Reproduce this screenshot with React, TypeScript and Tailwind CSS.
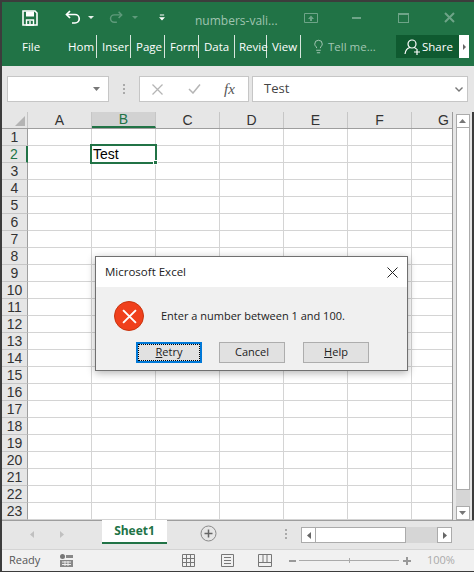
import React from 'react'
import { Lightbulb } from 'lucide-react'

const ui = "font-['Open_Sans','Noto_Sans',sans-serif]"
const cols = ['A', 'B', 'C', 'D', 'E', 'F', 'G']
const rows = Array.from({ length: 23 }, (_, i) => i + 1)

// the narrow window squeezes these labels, so only the visible part is written
const ribbonTabs = [
  { label: 'Hom', w: 'w-[29px]', pl: 'pl-0' },
  { label: 'Inser', w: 'w-[34px]', pl: 'pl-[5px]' },
  { label: 'Page', w: 'w-[34px]', pl: 'pl-[5px]' },
  { label: 'Form', w: 'w-[34px]', pl: 'pl-[5px]' },
  { label: 'Data', w: 'w-[36px]', pl: 'pl-[5px]' },
  { label: 'Revie', w: 'w-[32px]', pl: 'pl-[4px]' },
  { label: 'View', w: 'w-[34px]', pl: 'pl-[5px]' },
]

const Caret = ({ className = '' }: { className?: string }) => (
  <svg width="7" height="4" viewBox="0 0 7 4" className={className}>
    <path d="M0 0h7L3.5 4z" fill="currentColor" />
  </svg>
)

const TitleBar = () => (
  <div className="h-[31px] flex items-center text-white relative">
    {/* quick access */}
    <svg width="16" height="16" viewBox="0 0 16 16" fill="none" className="ml-[20px]">
      <path d="M1 1h12l2 2v12H1z" stroke="#fff" strokeWidth="1.6" />
      <path d="M4 1.5h8v5H4z" fill="#fff" />
      <path d="M4.5 10h7v5h-7z" stroke="#fff" strokeWidth="1.4" />
      <path d="M8 11v3" stroke="#fff" strokeWidth="1.4" />
    </svg>
    <svg width="16" height="15" viewBox="0 0 16 15" className="ml-[27px]" fill="none">
      <path d="M5 1 1.5 4.5 5 8" stroke="#fff" strokeWidth="1.7" />
      <path d="M2 4.5h8a4 4 0 0 1 0 8.500H7" stroke="#fff" strokeWidth="1.7" />
    </svg>
    <svg width="6" height="3" viewBox="0 0 6 3" className="ml-[7px]"><path d="M0 0h6L3 3z" fill="#e6f0ea" /></svg>
    <svg width="14" height="15" viewBox="0 0 16 15" className="ml-[15px]" fill="none">
      <path d="M11 1l3.500 3.500L11 8" stroke="#5f9a7b" strokeWidth="1.7" />
      <path d="M14 4.500H6a4 4 0 0 0 0 8.500h3" stroke="#5f9a7b" strokeWidth="1.7" />
    </svg>
    <svg width="6" height="3" viewBox="0 0 6 3" className="ml-[9px]"><path d="M0 0h6L3 3z" fill="#5f9a7b" /></svg>
    <svg width="6" height="8" viewBox="0 0 7 8" className="ml-[21px]">
      <path d="M1 0h5v1H1zM0 3h7L3.500 7z" fill="#fff" />
    </svg>
    <span className="ml-[30px] mt-[6px] text-[12px] text-[#9fc4b0] w-[100px] whitespace-nowrap">numbers-vali...</span>
    {/* window buttons */}
    <svg width="14" height="10" viewBox="0 0 14 10" className="ml-[9px]" fill="none">
      <path d="M.5.500h13v9H.5z" stroke="#6ea488" />
      <path d="M7 2.500 10 6H8v2H6V6H4z" fill="#6ea488" />
    </svg>
    <div className="ml-[34px] w-[9px] h-[2px] bg-[#6ea488] mt-[1px]" />
    <div className="ml-[37px] w-[11px] h-[10px] border border-[#6ea488] border-t-[2px]" />
    <svg width="11" height="11" viewBox="0 0 11 11" className="ml-[35px]" fill="none">
      <path d="M1 1l9 9M10 1l-9 9" stroke="#6ea488" strokeWidth="2" />
    </svg>
  </div>
)

const RibbonTabs = () => (
  <div className="h-[23px] flex items-center text-white text-[11.500px] mt-[2px]">
    <span className="ml-[20px] w-[46px]">File</span>
    {ribbonTabs.map(t => (
      <div key={t.label} className={`${t.w} ${t.pl} h-[23px] flex items-center whitespace-nowrap border-r border-[#d8e6de]`}>
        <span className="leading-none">{t.label}</span>
      </div>
    ))}
    <Lightbulb size={15} strokeWidth={1.4} className="ml-[10px] text-[#b3d0c0]" />
    <span className="ml-[2px] text-[#a3c6b3] text-[11.500px] w-[68px] whitespace-nowrap">Tell me...</span>
    <div className="w-[63px] h-[23px] bg-[#0f5a30] flex items-center pl-[8px]">
      <svg width="17" height="16" viewBox="0 0 17 16" fill="none">
        <circle cx="8" cy="5" r="4" stroke="#fff" strokeWidth="1.200" />
        <path d="M1 15c.5-4 2.500-6 5-6.500M10 8.500c1 .3 1.800.7 2.500 1.500" stroke="#fff" strokeWidth="1.200" />
        <path d="M10 13h6M13 10v6" stroke="#fff" strokeWidth="1.200" />
      </svg>
      <span className="ml-[1px] text-[11.500px]">Share</span>
    </div>
    <div className="w-[10px] h-[23px] bg-white flex items-center justify-center">
      <svg width="3" height="6" viewBox="0 0 3 6"><path d="M0 0l3 3-3 3z" fill="#666" /></svg>
    </div>
  </div>
)

const FormulaBar = () => (
  <div className="h-[46px] bg-[#e6e6e6] flex pt-[10px]">
    <div className="ml-[5px] w-[102px] h-[26px] bg-white border border-[#c6c6c6] flex items-center justify-end pr-[8px]">
      <Caret className="text-[#777]" />
    </div>
    <div className="w-[30px] h-[26px] flex flex-col items-center justify-center gap-[2px]">
      <div className="w-[2px] h-[2px] bg-[#aaa]" />
      <div className="w-[2px] h-[2px] bg-[#aaa]" />
      <div className="w-[2px] h-[2px] bg-[#aaa]" />
    </div>
    <div className="w-[110px] h-[26px] bg-white border border-[#c6c6c6] flex items-center">
      <svg width="11" height="11" viewBox="0 0 11 11" className="ml-[12px]" fill="none">
        <path d="M.5.500l10 10M10.500.500l-10 10" stroke="#b5b5b5" strokeWidth="1.300" />
      </svg>
      <svg width="13" height="10" viewBox="0 0 13 10" className="ml-[25px]" fill="none">
        <path d="M1 5l4 4 7-8.500" stroke="#b5b5b5" strokeWidth="1.500" />
      </svg>
      <span className="ml-[23px] font-['Liberation_Serif',serif] italic text-[15px] text-[#555]">fx</span>
    </div>
    <div className="ml-[3px] w-[216px] h-[26px] bg-white border border-[#c6c6c6] flex items-center pl-[11px] text-[13px] text-[#444]">
      <span className="flex-1">Test</span>
      <svg width="8" height="5" viewBox="0 0 8 5" className="mr-[4px]" fill="none">
        <path d="M.5.500 4 4 7.500.500" stroke="#777" strokeWidth="1.400" />
      </svg>
    </div>
  </div>
)

const Sheet = () => (
  <div className="flex h-[408px]">
    <div className="w-[451px] overflow-hidden border-r border-[#9b9b9b] font-['Liberation_Sans',sans-serif]">
      <div className="flex h-[17px] bg-[#e6e6e6] border-b border-[#9e9e9e]">
        <div className="w-[26px] shrink-0 border-r border-[#c6c6c6] flex items-end justify-end p-[2px]">
          <svg width="10" height="10" viewBox="0 0 10 10"><path d="M10 0v10H0z" fill="#b4b4b4" /></svg>
        </div>
        {cols.map(c => (
          <div
            key={c}
            className={`w-[64px] shrink-0 h-[16px] flex items-center justify-center text-[14px] border-r border-[#c6c6c6] ${c === 'B' ? 'bg-[#d2d2d2] text-[#217346] border-b-2 border-b-[#217346]' : 'text-[#333]'}`}
          >
            {c}
          </div>
        ))}
      </div>
      {rows.map(r => (
        <div key={r} className="flex h-[17px]">
          <div
            className={`w-[26px] shrink-0 bg-[#e6e6e6] border-b border-[#c6c6c6] flex items-center justify-center text-[14px] border-r ${r === 2 ? 'bg-[#d2d2d2] text-[#217346] border-r-2 border-r-[#217346]' : 'text-[#333] border-r-[#9e9e9e]'}`}
          >
            {r}
          </div>
          {cols.map(c => (
            <div key={c} className="w-[64px] shrink-0 bg-white border-r border-b border-[#d4d4d4] relative">
              {r === 2 && c === 'B' && (
                <div className="absolute -left-[2px] -top-[2px] w-[67px] h-[20px] border-2 border-[#217346] text-[14px] leading-[16px] pl-[1px] text-black z-10">
                  Test
                  <div className="absolute -right-[3px] -bottom-[3px] w-[5px] h-[5px] bg-[#217346] border border-white" />
                </div>
              )}
            </div>
          ))}
        </div>
      ))}
    </div>
    {/* vertical scrollbar */}
    <div className="w-[19px] bg-[#e6e6e6] flex flex-col items-center">
      <div className="w-[14px] h-[14px] bg-white border border-[#ababab] mt-[2px] flex items-center justify-center">
        <svg width="7" height="4" viewBox="0 0 7 4"><path d="M0 4h7L3.500 0z" fill="#777" /></svg>
      </div>
      <div className="w-[14px] h-[362px] bg-white border-x border-b border-[#ababab]" />
      <div className="w-[14px] flex-1 bg-[#d6d6d6]" />
      <div className="w-[14px] h-[14px] bg-white border border-[#ababab] flex items-center justify-center">
        <Caret className="text-[#777]" />
      </div>
    </div>
  </div>
)

const TabStrip = () => (
  <div className="h-[29px] bg-[#e6e6e6] border-t border-[#9e9e9e] flex">
    <svg width="4" height="7" viewBox="0 0 4 7" className="ml-[28px] mt-[10px]"><path d="M4 0v7L0 3.500z" fill="#c0c0c0" /></svg>
    <svg width="4" height="7" viewBox="0 0 4 7" className="ml-[26px] mt-[10px]"><path d="M0 0v7l4-3.500z" fill="#c0c0c0" /></svg>
    <div className="ml-[38px] w-[65px] h-[24px] -mt-[1px] bg-white border-b-2 border-[#217346] flex items-center justify-center text-[#217346] text-[12px] font-bold">
      Sheet1
    </div>
    <svg width="17" height="17" viewBox="0 0 17 17" className="ml-[33px] mt-[4px]" fill="none">
      <circle cx="8.500" cy="8.500" r="7.500" stroke="#8a8a8a" />
      <path d="M8.500 4.500v8M4.500 8.500h8" stroke="#666" strokeWidth="1.500" />
    </svg>
    <div className="ml-[68px] mt-[8px] flex flex-col gap-[2px]">
      <div className="w-[2px] h-[2px] bg-[#aaa]" />
      <div className="w-[2px] h-[2px] bg-[#aaa]" />
      <div className="w-[2px] h-[2px] bg-[#aaa]" />
    </div>
    {/* horizontal scrollbar */}
    <div className="ml-[14px] mt-[6px] h-[16px] flex">
      <div className="w-[15px] bg-white border border-[#ababab] flex items-center justify-center">
        <svg width="4" height="7" viewBox="0 0 4 7"><path d="M4 0v7L0 3.500z" fill="#666" /></svg>
      </div>
      <div className="w-[90px] bg-white border-y border-r border-[#ababab]" />
      <div className="w-[31px] bg-[#d6d6d6]" />
      <div className="w-[15px] bg-white border border-[#ababab] flex items-center justify-center">
        <svg width="4" height="7" viewBox="0 0 4 7"><path d="M0 0v7l4-3.500z" fill="#666" /></svg>
      </div>
    </div>
  </div>
)

const StatusBar = () => (
  <div className="h-[22px] bg-[#f1f1f1] border-t border-[#d4d4d4] flex items-center text-[11px] text-[#555]">
    <span className="ml-[7px] w-[50px]">Ready</span>
    <svg width="13" height="13" viewBox="0 0 13 13" className="ml-[1px]">
      <circle cx="2.500" cy="2.500" r="2.500" fill="#777" />
      <path d="M6 1h7v3H6zM0 6h13v7H0z" fill="#888" />
      <path d="M2 8h9M2 10.500h9M5 7v5M8 7v5" stroke="#eee" />
    </svg>
    <svg width="13" height="13" viewBox="0 0 13 13" className="ml-[109px]" fill="none" stroke="#777">
      <path d="M.5.500h12v12H.5zM.5 4.500h12M.5 8.500h12M4.500.500v12M8.500.500v12" />
    </svg>
    <svg width="13" height="13" viewBox="0 0 13 13" className="ml-[26px]" fill="none" stroke="#777">
      <path d="M.5.500h12v12H.5zM3 3.500h7M3 6.500h7M3 9.500h7" />
    </svg>
    <svg width="14" height="13" viewBox="0 0 14 13" className="ml-[24px]" fill="none" stroke="#777">
      <path d="M.5.500h13v12H.5zM.5 8.500h13M5 .500v8M9 .500v8" />
    </svg>
    <div className="ml-[17px] w-[7px] h-[2px] bg-[#999]" />
    <div className="ml-[3px] w-[100px] h-px bg-[#aaa] relative">
      <div className="absolute left-[50px] -top-[2px] w-px h-[5px] bg-[#aaa]" />
    </div>
    <svg width="8" height="8" viewBox="0 0 8 8" className="ml-[4px]"><path d="M3 0h2v3h3v2H5v3H3V5H0V3h3z" fill="#999" /></svg>
    <span className="ml-[16px] text-[#aaa]">100%</span>
  </div>
)

const Dialog = () => (
  <div className={`absolute left-[95px] top-[256px] w-[313px] h-[115px] border border-[#707070] bg-[#f0f0f0] shadow-[0_2px_8px_rgba(0,0,0,0.3)] ${ui}`}>
    <div className="h-[30px] bg-white flex items-center justify-between px-[9px] text-[11.500px] text-[#222]">
      <span>Microsoft Excel</span>
      <svg width="11" height="11" viewBox="0 0 11 11" fill="none"><path d="M.5.500l10 10M10.500.500l-10 10" stroke="#222" /></svg>
    </div>
    <div className="flex items-center mt-[14px] ml-[18px] text-[11px] text-[#222]">
      <div className="w-[30px] h-[30px] rounded-full bg-[#f0401c] border border-[#c8350f] flex items-center justify-center">
        <svg width="15" height="15" viewBox="0 0 14 14" fill="none"><path d="M1 1l12 12M13 1L1 13" stroke="#fff" strokeWidth="1.800" /></svg>
      </div>
      <span className="ml-[17px]">Enter a number between 1 and 100.</span>
    </div>
    <div className="flex mt-[11px] ml-[40px] text-[11px] text-[#222]">
      <button className="w-[66px] h-[21px] bg-[#e1e1e1] border-2 border-[#0078d7] flex items-center justify-center outline-1 outline-dotted -outline-offset-3 outline-black">
        <span><u>R</u>etry</span>
      </button>
      <button className="ml-[17px] w-[66px] h-[21px] bg-[#e1e1e1] border border-[#adadad]">Cancel</button>
      <button className="ml-[18px] w-[66px] h-[21px] bg-[#e1e1e1] border border-[#adadad]"><u>H</u>elp</button>
    </div>
  </div>
)

export default function App() {
  return (
    <div className={`relative w-[474px] h-[572px] overflow-hidden bg-[#3c3c3c] pt-[2px] pb-[2px] pl-[2px] ${ui}`}>
      <div className="w-[472px] bg-[#217346] h-[64px]">
        <TitleBar />
        <RibbonTabs />
      </div>
      <FormulaBar />
      <Sheet />
      <TabStrip />
      <StatusBar />
      <Dialog />
    </div>
  )
}
